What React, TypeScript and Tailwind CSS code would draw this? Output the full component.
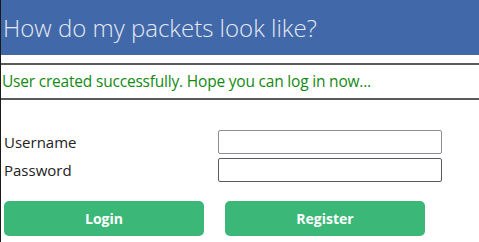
export default function App() {
    return (
        <div className="h-screen bg-white border-l border-[#1a1a1a] font-['Open_Sans',sans-serif]">
            <header className="h-[55px] bg-[#4168a9] flex items-center pl-[2px]">
                <h1 className="text-[24px] font-light text-[#e4e9f3] mt-[1px]">How do my packets look like?</h1>
            </header>
            <div className="mt-[8px] h-[37px] border-y-2 border-[#5a5a5a] flex items-center pl-[1px]">
                <p className="text-[15.5px] text-[#118a11] tracking-[-0.2px]">User created successfully. Hope you can log in now...</p>
            </div>
            <form className="pt-[30px] pl-[3px]" onSubmit={(e) => e.preventDefault()}>
                <div className="flex flex-col gap-[4px]">
                    <div className="flex items-center">
                        <label className="w-[214px] text-[15px] text-[#222]">Username</label>
                        <input type="text" className="w-[224px] h-[24px] border border-[#8f8b9b] rounded-[2px]" />
                    </div>
                    <div className="flex items-center">
                        <label className="w-[214px] text-[15px] text-[#222]">Password</label>
                        <input type="password" className="w-[224px] h-[24px] border border-[#5c5866] rounded-[2px]" />
                    </div>
                </div>
                <div className="flex gap-[21px] mt-[19px]">
                    <button className="w-[200px] h-[35px] rounded-[5px] bg-[#3bb877] text-white text-[14px] font-bold">Login</button>
                    <button className="w-[200px] h-[35px] rounded-[5px] bg-[#3bb877] text-white text-[14px] font-bold">Register</button>
                </div>
            </form>
        </div>
    )
}
